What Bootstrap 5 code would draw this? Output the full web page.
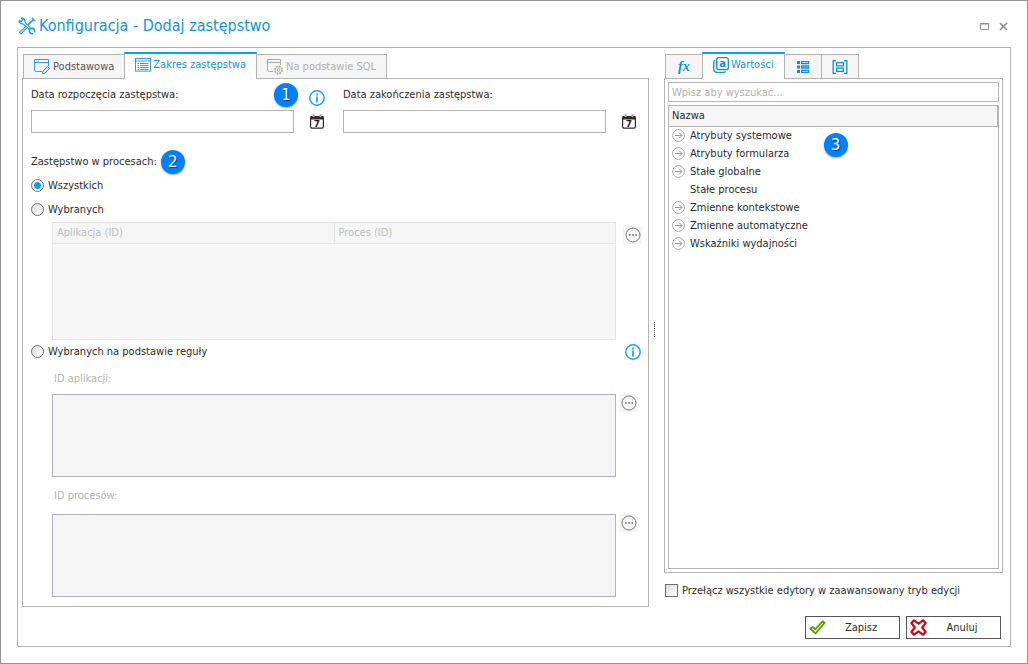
<!DOCTYPE html>
<html lang="pl">
<head>
<meta charset="utf-8">
<meta name="viewport" content="width=device-width, initial-scale=1">
<title>Konfiguracja - Dodaj zastępstwo</title>
<link href="https://cdn.jsdelivr.net/npm/bootstrap@5.3.0/dist/css/bootstrap.min.css" rel="stylesheet">
<style>
  :root { --line: #b4b4b4; --accent: #0a96e0; --bar: #00a2ff; --ink: #2b2b2b; --soft: #f5f5f5; }
  body { font-family: "DejaVu Sans Condensed", "DejaVu Sans", sans-serif; font-size: 11px; line-height: 16px; color: var(--ink); background: #fff; }
  button, input, textarea { font: inherit; color: inherit; }
  svg { display: block; flex: none; }
  .window { min-height: 100vh; border: 1px solid #969696; padding: 0 16px 16px; }
  .title-bar { height: 46px; padding: 4px 0 0 1px; gap: 3px; }
  .title-text { font-size: 16px; line-height: 24px; color: var(--accent); }
  .title-bar button { border: 0; background: none; padding: 4px 3px; color: #8c8c8c; }
  .frame { border: 1px solid var(--line); padding: 4px 7px 7px 4px; }
  .main-side { flex: 1 1 0; min-width: 0; }
  .tab-strip { padding-left: 1px; }
  .tab-strip .tab { height: 24px; border: 1px solid var(--line); border-left-width: 0; border-bottom: 0; background: var(--soft); color: #555; padding: 0 10px; display: flex; align-items: center; gap: 2px; }
  .tab-strip .tab:first-child { border-left-width: 1px; }
  .tab-strip .tab.active { height: 27px; margin: 0 0 -1px -1px; padding-bottom: 3px; border-left-width: 1px; border-top: 2px solid var(--bar); background: #fff; color: var(--accent); position: relative; z-index: 1; }
  .tab-strip .tab:disabled { color: #b0b0b0; }
  .tab-strip .tool { color: var(--accent); }
  .panel { border: 1px solid var(--line); }
  .side { flex: 0 0 339px; }
  .splitter { flex: 0 0 15px; }
  .splitter i { height: 15px; border-left: 1px dotted #555; margin-right: 4px; }
  .form-panel { padding: 4px 6px 9px 8px; }
  .dates { display: grid; grid-template-columns: 1fr 1fr; gap: 13px; }
  .dates > div { padding-right: 4px; }
  .head-row { height: 24px; }
  .entry-row { margin-top: 3px; gap: 14px; }
  .line-input { border: 1px solid var(--line); height: 23px; background: #fff; padding: 0 4px; border-radius: 0; outline: 0; min-width: 0; }
  .icon-btn { border: 0; background: none; padding: 0; width: 18px; height: 18px; display: flex; align-items: center; justify-content: center; flex: none; }
  .more { background: var(--soft); width: 19px; }
  .step { width: 24px; height: 24px; border-radius: 50%; background: #0080ff; color: #fff; font: 15px/24px "DejaVu Sans", sans-serif; text-align: center; box-shadow: 0 1px 2px rgba(0,0,0,.35); text-shadow: 1px 1px 1px rgba(0,0,0,.5); flex: none; }
  .step-gap { margin-right: 10px; }
  .section { margin-top: 17px; }
  .pick { height: 24px; gap: 4px; display: flex; align-items: center; }
  .pick input { appearance: none; width: 13px; height: 13px; border: 1px solid #6e6e6e; margin: 0; background: linear-gradient(135deg, #dcdcdc, #fff); flex: none; }
  .pick input, .tree li svg { margin-bottom: 2px; }
  .pick input[type=radio] { border-radius: 50%; }
  .pick input[type=radio]:checked { background: radial-gradient(circle, #00a2ff 0 3px, #fff 4px); }
  .indent { padding-left: 21px; }
  .beside { gap: 7px; }
  .area-row { gap: 3px; padding-right: 4px; }
  .list-box { border: 1px solid #e4e4e4; background: #f7f7f7; min-height: 80px; color: #bdbdbd; }
  .list-box table { width: 100%; table-layout: fixed; }
  .list-box th { font-weight: normal; height: 20px; padding: 0 4px; line-height: 18px; border-bottom: 1px solid #e4e4e4; background: var(--soft); }
  .list-box th + th { border-left: 1px solid #e4e4e4; }
  .area { height: 83px; border: 1px solid #b0b0c0; background: var(--soft); resize: none; display: block; border-radius: 0; min-width: 0; }
  .faint { color: #b4b4b4; padding-left: 2px; display: flex; align-items: center; height: 30px; }
  .faint.tall { height: 37px; }
  .side-panel { padding: 3px; }
  .side-panel .line-input { height: 20px; padding: 0 3px; }
  .side-panel .line-input::placeholder { color: #b0b0b0; opacity: 1; }
  .tree { border: 1px solid var(--line); margin-top: 3px; position: relative; }
  .tree-head { height: 21px; padding: 0 3px; line-height: 19px; background: var(--soft); border-bottom: 1px solid var(--line); border-right: 1px solid var(--line); }
  .tree li { height: 18px; gap: 5px; padding-left: 3px; display: flex; align-items: center; }
  .tree li.leaf { padding-left: 21px; }
  .tree .step { position: absolute; left: 47%; top: 27px; }
  .adv { margin: 6px 0 4px 1px; }
  .actions { margin-top: 9px; gap: 6px; padding-right: 2px; }
  .actions button { width: 95px; height: 23px; border: 1px solid #555; background: #fff; padding: 0 3px; display: flex; align-items: center; }
</style>
</head>
<body>
<svg width="0" height="0" class="position-absolute" aria-hidden="true">
  <symbol id="info" viewBox="0 0 16 16"><circle cx="8" cy="8" r="7.2" fill="none" stroke="#1ba4e6" stroke-width="1.5"/><path d="M8 3.5v2M8 6.5v6" stroke="#1ba4e6" stroke-width="1.7"/></symbol>
  <symbol id="cal" viewBox="0 0 14 15"><rect x=".6" y="2.6" width="12.8" height="11.6" rx="1.4" fill="#fff" stroke="#2b2b2b" stroke-width="1.2"/><path d="M.5 2h13v3.5H.5z" fill="#2b2b2b"/><path d="M3.5 0v3M10.5 0v3" stroke="#aaa" stroke-width="2"/></symbol>
  <symbol id="dots" viewBox="0 0 16 16"><circle cx="8" cy="8" r="7" fill="none" stroke="#777"/><path d="M4 8h1.6M7.2 8h1.6M10.4 8H12" stroke="#666" stroke-width="1.6"/></symbol>
  <symbol id="go" viewBox="0 0 13 13"><circle cx="6.5" cy="6.5" r="5.9" fill="none" stroke="#aaa"/><path d="M3 6.5h6.6M7 3.6l2.9 2.9L7 9.4" fill="none" stroke="#999"/></symbol>
</svg>

<div class="window d-flex flex-column">
  <header class="title-bar d-flex align-items-center">
    <svg width="18" height="18" viewBox="0 0 18 18" fill="none" stroke="#2c9fe0"><path d="M5.2 6.8 11.4 12.6M6.8 5.2 12.8 11.2" stroke-width="1.1"/><path d="M3.2 1A3.4 3.4 0 0 1 6.8 5.2M1 3.2A3.4 3.4 0 0 0 5.2 6.8M3.2 1 4.6 3 3 4.6 1 3.2" stroke-width="1.3"/><circle cx="14" cy="14" r="2.6" stroke-width="1.6"/><path d="M14.2 14.2 17.2 17.2" stroke="#fff" stroke-width="1.6"/><path d="M16 2 9.8 8.2M14 1 17 4" stroke-width="1.7"/><path d="M8 9.2 1.4 15 3 16.8 9.4 10.6z" fill="#8fd0f2"/></svg>
    <h1 class="title-text fw-normal m-0">Konfiguracja - Dodaj zastępstwo</h1>
    <div class="ms-auto d-flex gap-1">
      <button type="button" aria-label="Maksymalizuj"><svg width="9" height="9" viewBox="0 0 9 9"><path d="M.5 1.5h8v6h-8zM0 2h9" fill="none" stroke="currentColor"/></svg></button>
      <button type="button" aria-label="Zamknij"><svg width="9" height="9" viewBox="0 0 9 9"><path d="M1 1l7 7M8 1 1 8" stroke="currentColor" stroke-width="1.6"/></svg></button>
    </div>
  </header>

  <main class="frame flex-fill d-flex flex-column">
    <div class="d-flex flex-fill">
      <section class="main-side d-flex flex-column">
        <div class="tab-strip d-flex align-items-end" role="tablist">
          <button type="button" class="tab" role="tab"><svg width="17" height="16" viewBox="0 0 17 16" fill="none" stroke="#2c9fe0"><path d="M8 12.5H2.5A2 2 0 0 1 .5 11V.5h14V7M.5 3.5h14"/><path d="M2 2h3" stroke="#9bd3f3"/><path d="m9 12 4.5-4.5 2 2L11 14l-2.6.8z" fill="#d4ecfa"/></svg>Podstawowa</button>
          <button type="button" class="tab active" role="tab" aria-selected="true"><svg width="16" height="14" viewBox="0 0 16 14" fill="none" stroke="#2c9fe0"><rect x=".5" y=".5" width="15" height="12.6"/><path d="M.5 3h15M5 5.5h8.5M5 7.5h8.5M5 9.5h8.5M5 11.4h8.5M2.5 5.5H4M2.5 7.5H4M2.5 9.5H4M2.5 11.4H4"/></svg>Zakres zastępstwa</button>
          <button type="button" class="tab" role="tab" disabled><svg width="17" height="16" viewBox="0 0 17 16" fill="none" stroke="#aaa"><path d="M6 12.5H2.5A2 2 0 0 1 .5 11V.5h13V6M.5 3.5h13"/><circle cx="11.5" cy="11" r="3.6" stroke-width="1.6" stroke-dasharray="2 .8"/><circle cx="11.5" cy="11" r="1.4"/></svg>Na podstawie SQL</button>
        </div>
        <form class="panel form-panel flex-fill d-flex flex-column">
          <div class="dates">
            <div>
              <div class="head-row d-flex align-items-center">
                <label for="from" class="me-auto">Data rozpoczęcia zastępstwa:</label>
                <span class="step step-gap">1</span>
                <button type="button" class="icon-btn align-self-end" aria-label="Informacja"><svg width="16" height="16"><use href="#info"/></svg></button>
              </div>
              <div class="entry-row d-flex align-items-center">
                <input id="from" type="text" class="line-input flex-fill">
                <button type="button" class="icon-btn" aria-label="Kalendarz"><svg width="14" height="15"><use href="#cal"/><text x="7" y="13" text-anchor="middle" font-family="DejaVu Sans" font-weight="bold" font-size="9" fill="#222">7</text></svg></button>
              </div>
            </div>
            <div>
              <div class="head-row d-flex align-items-center"><label for="to">Data zakończenia zastępstwa:</label></div>
              <div class="entry-row d-flex align-items-center">
                <input id="to" type="text" class="line-input flex-fill">
                <button type="button" class="icon-btn" aria-label="Kalendarz"><svg width="14" height="15"><use href="#cal"/><text x="7" y="13" text-anchor="middle" font-family="DejaVu Sans" font-weight="bold" font-size="9" fill="#222">7</text></svg></button>
              </div>
            </div>
          </div>

          <div class="section head-row d-flex align-items-center"><span>Zastępstwo w procesach:</span><span class="step ms-1">2</span></div>
          <label class="pick"><input type="radio" name="scope" checked>Wszystkich</label>
          <label class="pick"><input type="radio" name="scope">Wybranych</label>
          <div class="indent beside d-flex flex-fill">
            <div class="list-box flex-fill">
              <table><thead><tr><th>Aplikacja (ID)</th><th>Proces (ID)</th></tr></thead></table>
            </div>
            <button type="button" class="icon-btn more mt-1" aria-label="Wybierz"><svg width="16" height="16"><use href="#dots"/></svg></button>
          </div>
          <div class="d-flex align-items-center">
            <label class="pick me-auto"><input type="radio" name="scope">Wybranych na podstawie reguły</label>
            <button type="button" class="icon-btn" aria-label="Informacja"><svg width="16" height="16"><use href="#info"/></svg></button>
          </div>
          <div class="indent">
            <label class="faint" for="apps">ID aplikacji:</label>
            <div class="area-row d-flex">
              <textarea id="apps" class="area flex-fill" disabled></textarea>
              <button type="button" class="icon-btn more" aria-label="Wybierz"><svg width="16" height="16"><use href="#dots"/></svg></button>
            </div>
            <label class="faint tall" for="procs">ID procesów:</label>
            <div class="area-row d-flex">
              <textarea id="procs" class="area flex-fill" disabled></textarea>
              <button type="button" class="icon-btn more" aria-label="Wybierz"><svg width="16" height="16"><use href="#dots"/></svg></button>
            </div>
          </div>
        </form>
      </section>

      <div class="splitter d-flex align-items-center justify-content-center"><i></i></div>

      <aside class="side d-flex flex-column">
        <div class="tab-strip d-flex align-items-end" role="tablist">
          <button type="button" class="tab tool" role="tab" aria-label="Funkcje"><svg width="16" height="16" viewBox="0 0 16 16"><text x="2" y="12" font-family="Liberation Serif" font-style="italic" font-weight="bold" font-size="14" fill="#0a8fdc">fx</text></svg></button>
          <button type="button" class="tab active" role="tab" aria-selected="true"><svg width="16" height="16" viewBox="0 0 16 16" fill="none" stroke="#0a8fdc" stroke-width="1.3"><rect x="3.7" y=".7" width="11.6" height="12" rx="2"/><path d="M1.8 3C.8 4 .7 5 .7 7v5c0 2 1.2 3.3 3.3 3.3h6.5c1 0 1.5-.2 2.2-.8"/><text x="9.5" y="10" text-anchor="middle" font-family="DejaVu Sans" font-weight="bold" font-size="10" fill="#0a8fdc" stroke="none">a</text></svg>Wartości</button>
          <button type="button" class="tab tool" role="tab" aria-label="Lista"><svg width="16" height="14" viewBox="0 0 16 14" fill="none" stroke="#0a8fdc" stroke-width="1.3"><path d="M6.6 1.6h7v2h-7zM6.6 6h7v2h-7zM6.6 10.4h7v2h-7z"/><path d="M2 2.6h3M2 7h3M2 11.4h3" stroke-width="3"/></svg></button>
          <button type="button" class="tab tool" role="tab" aria-label="Pola"><svg width="16" height="14" viewBox="0 0 16 14" fill="none" stroke="#0a8fdc" stroke-width="1.3"><path d="M4 .7H1.2v12.6H4M12 .7h2.8v12.6H12M4.6 2.6h6.8v3.2H4.6zM4.6 8.2h6.8v3.2H4.6z"/></svg></button>
        </div>
        <div class="panel side-panel flex-fill d-flex flex-column">
          <input type="text" class="line-input w-100" placeholder="Wpisz aby wyszukać..." aria-label="Wpisz aby wyszukać">
          <div class="tree flex-fill">
            <div class="tree-head">Nazwa</div>
            <ul class="list-unstyled m-0">
              <li><svg width="13" height="13"><use href="#go"/></svg>Atrybuty systemowe</li>
              <li><svg width="13" height="13"><use href="#go"/></svg>Atrybuty formularza</li>
              <li><svg width="13" height="13"><use href="#go"/></svg>Stałe globalne</li>
              <li class="leaf">Stałe procesu</li>
              <li><svg width="13" height="13"><use href="#go"/></svg>Zmienne kontekstowe</li>
              <li><svg width="13" height="13"><use href="#go"/></svg>Zmienne automatyczne</li>
              <li><svg width="13" height="13"><use href="#go"/></svg>Wskaźniki wydajności</li>
            </ul>
            <span class="step">3</span>
          </div>
        </div>
        <label class="pick adv"><input type="checkbox">Przełącz wszystkie edytory w zaawansowany tryb edycji</label>
      </aside>
    </div>
    <div class="actions d-flex justify-content-end">
      <button type="button"><svg width="17" height="15" viewBox="0 0 17 15"><path d="M1.3 8.8 3.6 6.9 6.4 9.2 13.6 1.3 15.6 2.8 6.6 13.4z" fill="#fff" stroke="#5f9a00" stroke-width="1.8" stroke-linejoin="round"/></svg><span class="flex-fill">Zapisz</span></button>
      <button type="button"><svg width="17" height="17" viewBox="0 0 17 17"><path d="M4 1.4 8.5 4.6 13 1.4 15.6 4 12.2 8.5 15.6 13 13 15.6 8.5 12.4 4 15.6 1.4 13 4.8 8.5 1.4 4z" fill="#fff" stroke="#cc0a14" stroke-width="2.2" stroke-linejoin="round"/></svg><span class="flex-fill">Anuluj</span></button>
    </div>
  </main>
</div>
<script src="https://cdn.jsdelivr.net/npm/bootstrap@5.3.0/dist/js/bootstrap.bundle.min.js"></script>
</body>
</html>
